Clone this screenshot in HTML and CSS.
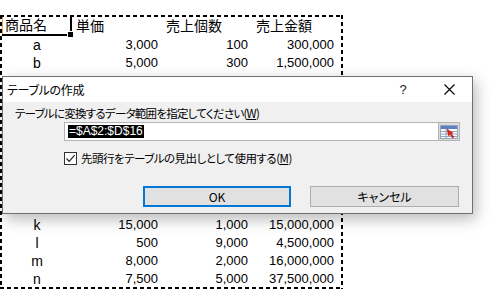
FILE: index.html
```html
<!DOCTYPE html>
<html lang="ja">

<head>
	<meta charset="UTF-8">
	<meta name="viewport" content="width=device-width, initial-scale=1.0">
	<title>テーブルの作成</title>
	<link rel="stylesheet" href="styles.css">
</head>

<body>
	<div class="sheet">
		<div class="grid">
			<div class="cell head active">商品名<span class="handle"></span></div>
			<div class="cell head">単価</div>
			<div class="cell head">売上個数</div>
			<div class="cell head">売上金額</div>

			<div class="cell name">a</div><div class="cell num">3,000</div><div class="cell num">100</div><div class="cell num last">300,000</div>
			<div class="cell name">b</div><div class="cell num">5,000</div><div class="cell num">300</div><div class="cell num last">1,500,000</div>
			<!-- rows c to j sit under the dialog -->
			<div class="cell hidden-row"></div>
			<div class="cell hidden-row"></div>
			<div class="cell hidden-row"></div>
			<div class="cell hidden-row"></div>
			<div class="cell hidden-row"></div>
			<div class="cell hidden-row"></div>
			<div class="cell hidden-row"></div>
			<div class="cell hidden-row"></div>
			<div class="cell name">k</div><div class="cell num">15,000</div><div class="cell num">1,000</div><div class="cell num last">15,000,000</div>
			<div class="cell name">l</div><div class="cell num">500</div><div class="cell num">9,000</div><div class="cell num last">4,500,000</div>
			<div class="cell name">m</div><div class="cell num">8,000</div><div class="cell num">2,000</div><div class="cell num last">16,000,000</div>
			<div class="cell name">n</div><div class="cell num">7,500</div><div class="cell num">5,000</div><div class="cell num last">37,500,000</div>
		</div>
	</div>

	<div class="dialog">
		<div class="titlebar">
			<span class="title">テーブルの作成</span>
			<span class="tb-btn help">?</span>
			<span class="tb-btn">
				<svg width="11" height="11" viewBox="0 0 11 11"><path d="M0.5 0.5 L10.5 10.5 M10.5 0.5 L0.5 10.5" stroke="#000" stroke-width="1.1" fill="none"/></svg>
			</span>
		</div>
		<div class="dialog-body">
			<div class="label">テーブルに変換するデータ範囲を指定してください(<u>W</u>)</div>
			<div class="range">
				<div class="field"><span class="selected">=$A$2:$D$16</span></div>
				<div class="picker">
					<svg width="18" height="14" viewBox="0 0 18 14">
						<rect x="0.5" y="0.5" width="17" height="13" fill="#fff" stroke="#9aa6b8"/>
						<rect x="1" y="1" width="16" height="3" fill="#5b7fc0"/>
						<path d="M1 6.5 H17 M1 9 H17 M1 11.5 H17" stroke="#8fa3c6" stroke-width="1"/>
						<path d="M6 4 V13" stroke="#8fa3c6" stroke-width="1"/>
						<path d="M7 4 L13 8 L11 8.5 L14 12 L12.5 13 L10 9.5 L8.5 11 Z" fill="#e0261b" stroke="#a8120c" stroke-width="0.5"/>
					</svg>
				</div>
			</div>
			<label class="check">
				<span class="box">
					<svg width="11" height="11" viewBox="0 0 11 11"><path d="M1.5 5.5 L4.2 8.3 L9.6 2.2" stroke="#222" stroke-width="1.2" fill="none"/></svg>
				</span>
				<span>先頭行をテーブルの見出しとして使用する(<u>M</u>)</span>
			</label>
			<div class="buttons">
				<button type="button" class="btn ok">OK</button>
				<button type="button" class="btn cancel">キャンセル</button>
			</div>
		</div>
	</div>
</body>

</html>
```

FILE: styles.css
```css
html {
	background: #fff;
}

body {
	margin: 0;
	width: 491px;
	height: 293px;
	overflow: hidden;
	position: relative;
	font-family: "Liberation Sans", "Noto Sans CJK JP", sans-serif;
}

/* the copied range, with its marching ants border */
.sheet {
	margin-top: 15px;
	width: 343px;
	height: 274px;
	position: relative;
	overflow: hidden;
}

.sheet::after {
	content: "";
	position: absolute;
	inset: 0;
	pointer-events: none;
	background:
		repeating-linear-gradient(to right, #000 0 4px, transparent 4px 7px) top left / 100% 2px no-repeat,
		repeating-linear-gradient(to right, #000 0 4px, transparent 4px 7px) bottom left / 100% 2px no-repeat,
		repeating-linear-gradient(to bottom, #000 0 4px, transparent 4px 7px) top left / 2px 100% no-repeat,
		repeating-linear-gradient(to bottom, #000 0 4px, transparent 4px 7px) top right / 2px 100% no-repeat;
}

.grid {
	display: grid;
	grid-template-columns: 70px 90px 90px 1fr;
	grid-auto-rows: 18px;
	grid-template-rows: 19px;
	padding: 2px 0 0 2px;
	font-size: 13px;
	line-height: 18px;
	color: #000;
}

.cell {
	padding: 0 3px;
	white-space: nowrap;
}

.hidden-row {
	grid-column: 1 / -1;
}

.head {
	padding-left: 4px;
	line-height: 19px;
	font-size: 14px;
}

.active {
	position: relative;
	padding-left: 3px;
	border-right: 2px solid #000;
	border-bottom: 2px solid #000;
	box-shadow: inset 1px 0 #e9a04a;
	line-height: 17px;
}

.handle {
	position: absolute;
	right: -4px;
	bottom: -4px;
	width: 5px;
	height: 5px;
	background: #000;
	border: 1px solid #fff;
}

.name {
	text-align: center;
	font-size: 14px;
}

.num {
	text-align: right;
	padding-right: 4px;
}

.num.last {
	padding-right: 9px;
}

/* dialog */
.dialog {
	position: absolute;
	left: 2px;
	top: 76px;
	width: 469px;
	height: 136px;
	border: 1px solid #707070;
	background: #f0f0f0;
	box-shadow: 3px 5px 14px rgba(0, 0, 0, 0.28);
	font-family: "Noto Sans CJK JP", sans-serif;
	font-feature-settings: "palt";
	font-size: 12px;
	color: #000;
}

.titlebar {
	height: 25px;
	background: #fff;
	display: flex;
	align-items: center;
}

.title {
	flex: 1;
	padding-left: 4px;
	letter-spacing: -0.3px;
}

.tb-btn {
	width: 46px;
	height: 25px;
	display: flex;
	align-items: center;
	justify-content: center;
	font-family: "Liberation Sans", sans-serif;
	font-size: 13px;
}

.help {
	color: #222;
}

.dialog-body {
	padding: 3px 12px 0;
	display: flex;
	flex-direction: column;
	align-items: flex-start;
}

.label {
	line-height: 16px;
	height: 16px;
	font-size: 11.5px;
	letter-spacing: -0.75px;
}

.range {
	margin: 1px 0 0 49px;
	width: 396px;
	height: 19px;
	display: flex;
}

.field {
	flex: 1;
	background: #fff;
	border: 1px solid #b4b4b4;
	display: flex;
	align-items: center;
	padding-left: 3px;
}

.selected {
	background: #000;
	color: #fff;
	font-family: "Liberation Sans", sans-serif;
	font-size: 12px;
	line-height: 13px;
	padding: 0 1px;
}

.picker {
	width: 20px;
	background: #dcdcdc;
	border: 1px solid #b4b4b4;
	border-left: none;
	display: flex;
	align-items: center;
	justify-content: center;
}

.check {
	margin: 10px 0 0 49px;
	height: 14px;
	display: flex;
	align-items: center;
	gap: 4px;
	font-size: 11.5px;
	letter-spacing: -0.5px;
	line-height: 14px;
}

.box {
	width: 11px;
	height: 11px;
	border: 1px solid #333;
	background: #fff;
	display: flex;
}

.buttons {
	margin: 21px 0 0 128px;
	display: flex;
	gap: 19px;
}

.btn {
	height: 21px;
	background: #e1e1e1;
	font-family: "Noto Sans CJK JP", sans-serif;
	font-feature-settings: "palt";
	font-size: 12px;
	color: #000;
	padding: 0;
	line-height: 16px;
}

.ok {
	width: 148px;
	border: 2px solid #0078d7;
}

.cancel {
	width: 149px;
	border: 1px solid #adadad;
}
```
